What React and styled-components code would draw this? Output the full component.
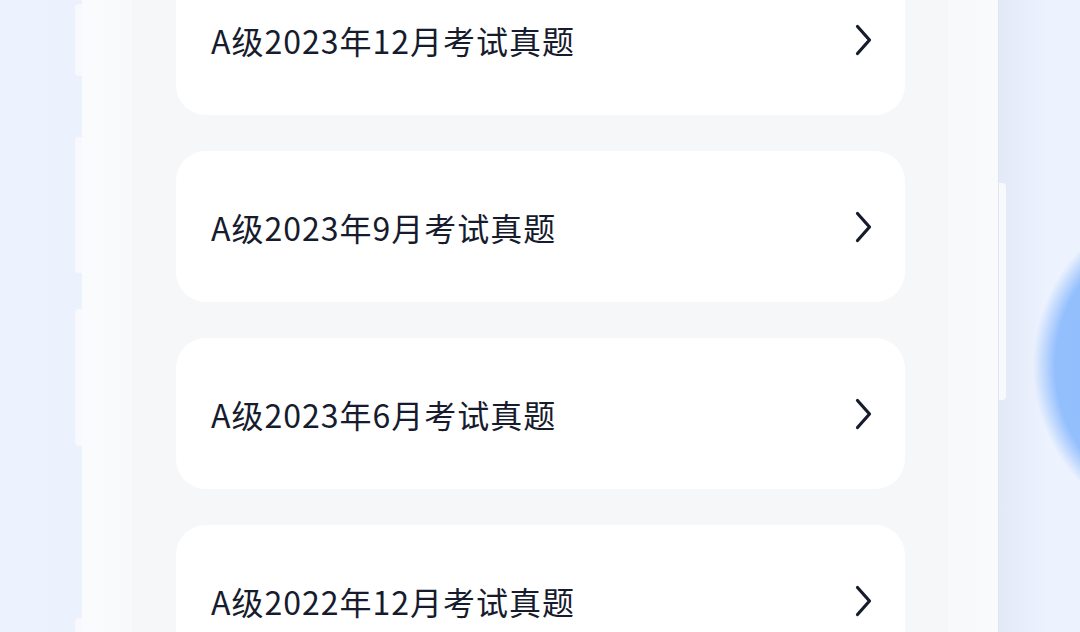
import React from "react";
import styled, { createGlobalStyle } from "styled-components";

const exams = [
  "A级2023年12月考试真题",
  "A级2023年9月考试真题",
  "A级2023年6月考试真题",
  "A级2022年12月考试真题",
];

const leftTabs = [
  { top: 4, height: 72 },
  { top: 61, height: 136 },
  { top: 36, height: 137 },
  { top: 172, height: 137 },
];

function Chevron() {
  return (
    <svg width="20" height="34" viewBox="0 0 20 34" fill="none">
      <path
        d="M4.5 3.5L16.5 17L4.5 30.5"
        stroke="#161c2d"
        strokeWidth="3.2"
        strokeLinecap="round"
        strokeLinejoin="round"
      />
    </svg>
  );
}

function App() {
  return (
    <>
      <GlobalStyle />
      <Screen>
        <LeftRail>
          {leftTabs.map((t, i) => (
            <RailTab key={i} $top={t.top} $height={t.height} $side="left" />
          ))}
        </LeftRail>
        <Sheet>
          <ListPanel>
            <List>
              {exams.map((title) => (
                <ExamCard key={title}>
                  <ExamTitle>{title}</ExamTitle>
                  <Chevron />
                </ExamCard>
              ))}
            </List>
          </ListPanel>
        </Sheet>
        <RightRail>
          <RailTab $top={183} $height={217} $side="right" />
        </RightRail>
      </Screen>
    </>
  );
}

export default App;

const GlobalStyle = createGlobalStyle`
  html, body {
    margin: 0;
    padding: 0;
    overflow: hidden;
    background: #edf3fe;
  }
  body {
    font-family: "Noto Sans CJK SC", "Noto Sans", sans-serif;
  }
`;

const Screen = styled.div`
  display: flex;
  width: 1080px;
  height: 632px;
  overflow: hidden;
  background: #edf3fe;
`;

const LeftRail = styled.div`
  width: 82px;
  flex-shrink: 0;
  display: flex;
  flex-direction: column;
  align-items: flex-end;
  background: linear-gradient(to right, #edf3fe, #ebf1fd);
`;

const RightRail = styled.div`
  width: 82px;
  flex-shrink: 0;
  display: flex;
  flex-direction: column;
  align-items: flex-start;
  border-left: 1px solid #dfe5f3;
  box-sizing: border-box;
  background:
    radial-gradient(circle at 202px 366px, #8dbafc 0, #94bffd 146px, rgba(236, 242, 254, 0) 168px),
    linear-gradient(to right, #e3e9f6, #ecf2fe 48px);
`;

const RailTab = styled.div`
  flex-shrink: 0;
  width: 7px;
  margin-top: ${(p) => p.$top}px;
  height: ${(p) => p.$height}px;
  background: #f8f9fc;
  border-radius: ${(p) => (p.$side === "left" ? "4px 0 0 4px" : "0 4px 4px 0")};
`;

const Sheet = styled.div`
  flex: 1;
  display: flex;
  padding: 0 50px;
  background: linear-gradient(to right, #fafbfd, #f8f9fb 50px, #f8f9fb calc(100% - 50px), #f9fafb);
`;

const ListPanel = styled.div`
  flex: 1;
  padding: 0 43px 0 44px;
  background: #f6f7f9;
  overflow: hidden;
`;

const List = styled.div`
  display: flex;
  flex-direction: column;
  gap: 36px;
  margin-top: -36px;
`;

const ExamCard = styled.div`
  height: 151px;
  flex-shrink: 0;
  display: flex;
  align-items: center;
  justify-content: space-between;
  padding: 0 32px 0 35px;
  background: #ffffff;
  border-radius: 30px;
`;

const ExamTitle = styled.span`
  font-size: 32px;
  font-weight: 400;
  color: #161c2d;
  letter-spacing: 1px;
`;
